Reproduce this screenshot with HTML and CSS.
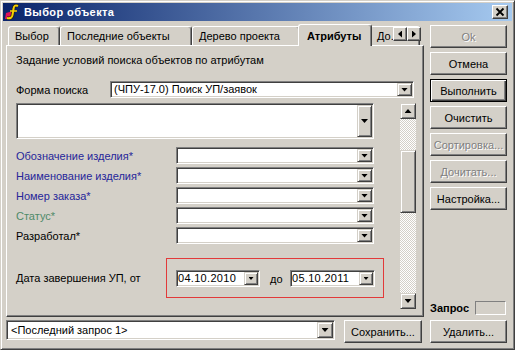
FILE: index.html
```html
<!DOCTYPE html>
<html lang="ru">
<head>
    <meta charset="UTF-8">
    <meta name="viewport" content="width=device-width, initial-scale=1.0">
    <title>Выбор объекта</title>
    <link rel="stylesheet" href="styles.css">
</head>
<body>
    <div class="window">
        <div class="titlebar">
            <svg class="app-icon" width="16" height="16" viewBox="0 0 16 16">
                <polygon points="2,9 9,7 8,15 1,15" fill="#e0105a"/>
                <path d="M14 2 Q10 0 9.5 5 L8.5 11 Q8 15 3 14" fill="none" stroke="#202020" stroke-width="3.6"/>
                <path d="M14 2 Q10 0 9.5 5 L8.5 11 Q8 15 3 14" fill="none" stroke="#f8d000" stroke-width="2"/>
                <path d="M6 7 H13" stroke="#f8d000" stroke-width="1.5"/>
            </svg>
            <span class="title">Выбор объекта</span>
            <div class="close-btn">
                <svg width="14" height="12" viewBox="0 0 14 12">
                    <path d="M3.5 2.5 L10.5 9.5 M10.5 2.5 L3.5 9.5" stroke="#000" stroke-width="1.8"/>
                </svg>
            </div>
        </div>

        <div class="main">
            <div class="left">
                <div class="tabs">
                    <div class="tab tab-select">Выбор</div>
                    <div class="tab tab-recent">Последние объекты</div>
                    <div class="tab tab-tree">Дерево проекта</div>
                    <div class="tab tab-attr active">Атрибуты</div>
                    <div class="tab tab-docs">До...</div>
                    <div class="tab-arrows">
                        <span class="arrow-btn"><span class="tri tri-left"></span></span>
                        <span class="arrow-btn"><span class="tri tri-right"></span></span>
                    </div>
                </div>
                <div class="panel">
                    <div class="panel-title">Задание условий поиска объектов по атрибутам</div>
                    <div class="form-row">
                        <span class="form-label">Форма поиска</span>
                        <div class="combo combo-form">
                            <span class="combo-text">(ЧПУ-17.0) Поиск УП/заявок</span>
                            <span class="drop"><span class="tri tri-down"></span></span>
                        </div>
                    </div>
                    <div class="scroll-area">
                        <div class="fields">
                            <div class="combo combo-memo">
                                <span class="combo-text"></span>
                                <span class="drop"><span class="tri tri-down"></span></span>
                            </div>
                            <div class="field-row">
                                <span class="field-label blue">Обозначение изделия*</span>
                                <div class="combo combo-field"><span class="combo-text"></span><span class="drop"><span class="tri tri-down"></span></span></div>
                            </div>
                            <div class="field-row">
                                <span class="field-label blue">Наименование изделия*</span>
                                <div class="combo combo-field"><span class="combo-text"></span><span class="drop"><span class="tri tri-down"></span></span></div>
                            </div>
                            <div class="field-row">
                                <span class="field-label blue">Номер заказа*</span>
                                <div class="combo combo-field"><span class="combo-text"></span><span class="drop"><span class="tri tri-down"></span></span></div>
                            </div>
                            <div class="field-row">
                                <span class="field-label green">Статус*</span>
                                <div class="combo combo-field"><span class="combo-text"></span><span class="drop"><span class="tri tri-down"></span></span></div>
                            </div>
                            <div class="field-row">
                                <span class="field-label">Разработал*</span>
                                <div class="combo combo-field"><span class="combo-text"></span><span class="drop"><span class="tri tri-down"></span></span></div>
                            </div>
                            <div class="date-row">
                                <span class="date-label">Дата завершения УП, от</span>
                                <div class="date-box">
                                    <div class="datefield date-from">
                                        <span class="date-text">04.10.2010</span>
                                        <span class="date-drop"><span class="tri tri-small"></span></span>
                                    </div>
                                    <span class="date-sep">до</span>
                                    <div class="datefield date-to">
                                        <span class="date-text">05.10.2011</span>
                                        <span class="date-drop"><span class="tri tri-small"></span></span>
                                    </div>
                                </div>
                            </div>
                        </div>
                        <div class="vscroll">
                            <span class="sb-btn"><span class="tri tri-up"></span></span>
                            <div class="sb-track"><div class="sb-thumb"></div></div>
                            <span class="sb-btn"><span class="tri tri-down"></span></span>
                        </div>
                    </div>
                </div>
            </div>

            <div class="side">
                <div class="btn disabled">Ok</div>
                <div class="btn">Отмена</div>
                <div class="btn default">Выполнить</div>
                <div class="btn">Очистить</div>
                <div class="btn disabled">Сортировка...</div>
                <div class="btn disabled">Дочитать...</div>
                <div class="btn">Настройка...</div>
                <div class="query">
                    <span class="query-label">Запрос</span>
                    <span class="query-box"></span>
                </div>
            </div>
        </div>

        <div class="footer">
            <div class="combo combo-last">
                <span class="combo-text">&lt;Последний запрос 1&gt;</span>
                <span class="drop"><span class="tri tri-down"></span></span>
            </div>
            <div class="btn btn-save">Сохранить...</div>
            <div class="btn btn-delete">Удалить...</div>
        </div>
    </div>
</body>
</html>
```

FILE: styles.css
```css
body {
    margin: 0;
    font-family: "Liberation Sans", Arial, sans-serif;
    font-size: 11px;
    color: #000;
    background: #d4d0c8;
}
.window {
    width: 515px;
    height: 350px;
    box-sizing: border-box;
    background: #d4d0c8;
    border: 1px solid;
    border-color: #d4d0c8 #404040 #404040 #d4d0c8;
    box-shadow: inset 1px 1px #fff, inset -1px -1px #808080;
    padding: 2px;
    display: flex;
    flex-direction: column;
}

/* title bar */
.titlebar {
    height: 18px;
    flex-shrink: 0;
    display: flex;
    align-items: center;
    padding: 0 4px 0 1px;
    background: linear-gradient(to right, #0a246a, #a6caf0);
    color: #fff;
}
.app-icon {
    display: block;
}
.title {
    margin-left: 4px;
    font-weight: bold;
    font-size: 11px;
    letter-spacing: 0.4px;
    flex: 1;
}
.close-btn {
    width: 16px;
    height: 14px;
    box-sizing: border-box;
    background: #d4d0c8;
    border: 1px solid;
    border-color: #fff #404040 #404040 #fff;
    box-shadow: inset -1px -1px #808080;
    display: flex;
    align-items: center;
    justify-content: center;
}
.close-btn svg {
    display: block;
}

/* main area */
.main {
    margin-top: 3px;
    height: 293px;
    display: flex;
    flex-shrink: 0;
}
.left {
    width: 418px;
    margin-left: 3px;
    display: flex;
    flex-direction: column;
}
.tabs {
    height: 22px;
    flex-shrink: 0;
    position: relative;
    z-index: 2;
    display: flex;
    align-items: flex-end;
    padding-left: 2px;
    overflow: hidden;
}
.tab {
    height: 19px;
    margin-bottom: 1px;
    box-sizing: border-box;
    flex-shrink: 0;
    padding: 3px 0 0 6px;
    line-height: 13px;
    white-space: nowrap;
    overflow: hidden;
    background: #d4d0c8;
    border: 1px solid;
    border-color: #fff #404040 transparent #fff;
    border-bottom: none;
    border-radius: 3px 3px 0 0;
    box-shadow: inset -1px 0 #808080;
}
.tab-select { width: 52px; }
.tab-recent { width: 132px; }
.tab-tree { width: 108px; }
.tab-attr { width: 74px; }
.tab-docs { width: 50px; }
.tab.active {
    position: relative;
    z-index: 1;
    height: 22px;
    margin: 0 -2px;
    padding: 5px 0 0 8px;
    font-weight: bold;
}
.tab-arrows {
    position: absolute;
    top: 3px;
    right: 3px;
    display: flex;
}
.arrow-btn {
    width: 14px;
    height: 14px;
    box-sizing: border-box;
    background: #d4d0c8;
    border: 1px solid;
    border-color: #fff #404040 #404040 #fff;
    box-shadow: inset -1px -1px #808080;
    display: flex;
    align-items: center;
    justify-content: center;
}

/* triangles */
.tri {
    display: block;
    background: #000;
}
.tri-down {
    width: 7px;
    height: 4px;
    clip-path: polygon(0 0, 100% 0, 50% 100%);
}
.tri-up {
    width: 7px;
    height: 4px;
    clip-path: polygon(50% 0, 100% 100%, 0 100%);
}
.tri-left {
    width: 4px;
    height: 7px;
    clip-path: polygon(100% 0, 100% 100%, 0 50%);
}
.tri-right {
    width: 4px;
    height: 7px;
    clip-path: polygon(0 0, 100% 50%, 0 100%);
}
.tri-small {
    width: 5px;
    height: 3px;
    clip-path: polygon(0 0, 100% 0, 50% 100%);
}

/* tab panel */
.panel {
    flex: 1;
    margin-top: -1px;
    box-sizing: border-box;
    border: 1px solid;
    border-color: #fff #404040 #404040 #fff;
    box-shadow: inset -1px -1px #808080;
    padding: 7px 7px 0 9px;
    display: flex;
    flex-direction: column;
}
.panel-title {
    height: 14px;
    line-height: 14px;
}
.form-row {
    margin-top: 14px;
    height: 17px;
    display: flex;
    align-items: center;
}
.form-label {
    width: 94px;
}

/* combo boxes */
.combo {
    height: 17px;
    box-sizing: border-box;
    background: #fff;
    border: 1px solid;
    border-color: #808080 #fff #fff #808080;
    box-shadow: inset 1px 1px #404040, inset -1px -1px #d4d0c8;
    padding: 1px;
    display: flex;
}
.combo-text {
    flex: 1;
    padding-left: 2px;
    line-height: 13px;
    white-space: nowrap;
    overflow: hidden;
}
.drop {
    width: 15px;
    box-sizing: border-box;
    background: #d4d0c8;
    border: 1px solid;
    border-color: #d4d0c8 #404040 #404040 #d4d0c8;
    box-shadow: inset 1px 1px #fff, inset -1px -1px #808080;
    display: flex;
    align-items: center;
    justify-content: center;
}
.combo-form { width: 304px; }
.combo-memo {
    width: 358px;
    height: 36px;
    margin-bottom: 8px;
}
.combo-field { width: 198px; }
.combo-last {
    width: 329px;
    height: 20px;
    margin-left: 3px;
}
.combo-last .combo-text {
    padding-left: 3px;
    line-height: 16px;
}
.combo-last .drop {
    width: 16px;
}

/* scrolling form */
.scroll-area {
    margin-top: 5px;
    height: 206px;
    display: flex;
}
.fields {
    width: 384px;
    display: flex;
    flex-direction: column;
}
.field-row {
    height: 17px;
    margin-bottom: 3px;
    display: flex;
    align-items: center;
}
.field-label {
    width: 160px;
}
.field-label.blue {
    color: #26269a;
}
.field-label.green {
    color: #4f8a68;
}
.date-row {
    margin-top: 11px;
    display: flex;
    align-items: center;
}
.date-label {
    width: 150px;
}
.date-box {
    border: 1px solid #e23a3a;
    padding: 11px 8px 10px 9px;
    display: flex;
    align-items: center;
}
.datefield {
    height: 17px;
    box-sizing: border-box;
    background: #fff;
    border: 1px solid;
    border-color: #808080 #fff #fff #808080;
    box-shadow: inset 1px 1px #404040, inset -1px -1px #d4d0c8;
    padding: 1px;
    display: flex;
}
.date-from { width: 84px; }
.date-to { width: 85px; }
.date-text {
    flex: 1;
    line-height: 13px;
    letter-spacing: 0.3px;
}
.date-drop {
    width: 14px;
    box-sizing: border-box;
    background: #d4d0c8;
    border: 1px solid;
    border-color: #d4d0c8 #404040 #404040 #d4d0c8;
    box-shadow: inset 1px 1px #fff, inset -1px -1px #808080;
    display: flex;
    align-items: center;
    justify-content: center;
}
.date-sep {
    width: 20px;
    margin-left: 10px;
}

.vscroll {
    width: 16px;
    display: flex;
    flex-direction: column;
}
.sb-btn {
    height: 16px;
    box-sizing: border-box;
    background: #d4d0c8;
    border: 1px solid;
    border-color: #d4d0c8 #404040 #404040 #d4d0c8;
    box-shadow: inset 1px 1px #fff, inset -1px -1px #808080;
    display: flex;
    align-items: center;
    justify-content: center;
}
.sb-track {
    flex: 1;
    background: repeating-conic-gradient(#d4d0c8 0 25%, #fff 0 50%) 0 0 / 2px 2px;
}
.sb-thumb {
    margin-top: 31px;
    height: 63px;
    box-sizing: border-box;
    background: #d4d0c8;
    border: 1px solid;
    border-color: #d4d0c8 #404040 #404040 #d4d0c8;
    box-shadow: inset 1px 1px #fff, inset -1px -1px #808080;
}

/* buttons */
.side {
    width: 77px;
    margin-left: 6px;
    padding-top: 1px;
    display: flex;
    flex-direction: column;
    gap: 4px;
}
.btn {
    width: 77px;
    height: 23px;
    box-sizing: border-box;
    flex-shrink: 0;
    background: #d4d0c8;
    border: 1px solid;
    border-color: #fff #404040 #404040 #fff;
    box-shadow: inset -1px -1px #808080;
    display: flex;
    align-items: center;
    justify-content: center;
    white-space: nowrap;
}
.btn.default {
    border-color: #000;
    box-shadow: inset 1px 1px #fff, inset -1px -1px #404040, inset -2px -2px #808080;
}
.btn.disabled {
    color: #808080;
    text-shadow: 1px 1px #fff;
}
.query {
    margin-top: auto;
    margin-bottom: 2px;
    display: flex;
    align-items: center;
}
.query-label {
    width: 45px;
    font-weight: bold;
}
.query-box {
    width: 31px;
    height: 14px;
    box-sizing: border-box;
    border: 1px solid;
    border-color: #808080 #fff #fff #808080;
}

/* bottom row */
.footer {
    margin-top: 3px;
    height: 23px;
    display: flex;
    align-items: flex-start;
}
.btn-save {
    width: 78px;
    margin-left: 9px;
}
.btn-delete {
    margin-left: 8px;
}
```
